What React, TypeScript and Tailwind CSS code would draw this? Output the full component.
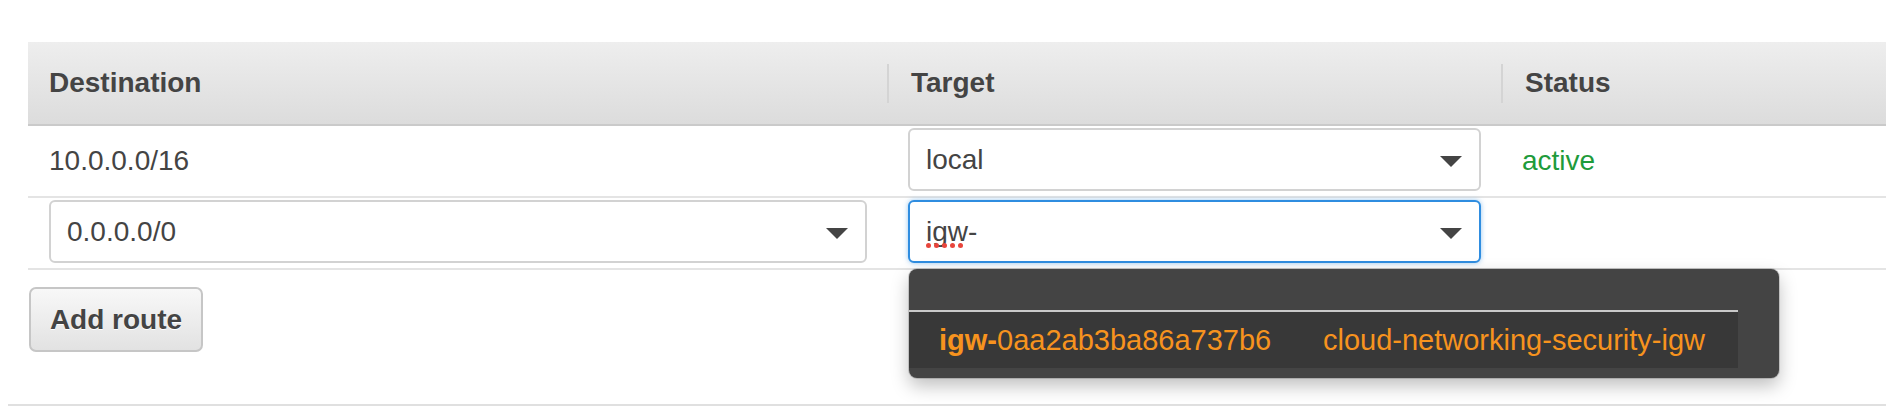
import React from "react";

const cols = "grid grid-cols-[859px_614px_1fr]";

function Caret() {
  return (
    <svg width="22" height="11" viewBox="0 0 22 11" className="mt-[4px] shrink-0">
      <polygon points="0,0 22,0 11,11" fill="#444" />
    </svg>
  );
}

function SelectBox({ children, focused }: { children: React.ReactNode; focused?: boolean }) {
  return (
    <div
      className={`flex h-[63px] w-full items-center justify-between rounded-[6px] border-2 bg-white pl-[16px] pr-[17px] ${
        focused
          ? "border-[#2f8de0] shadow-[0_0_5px_rgba(47,141,224,0.5)]"
          : "border-[#d2d2d2]"
      }`}
    >
      <span className="text-[28px] leading-[32px] text-[#444]">{children}</span>
      <Caret />
    </div>
  );
}

function HeaderCell({ label, divider }: { label: string; divider?: boolean }) {
  return (
    <div className="flex h-full items-center">
      {divider && <span className="h-[39px] w-[2px] bg-[#d4d4d4]" />}
      <span className={`text-[28px] font-bold text-[#444] ${divider ? "ml-[22px]" : "ml-[21px]"}`}>
        {label}
      </span>
    </div>
  );
}

// spellcheck squiggle under the typed text
function Misspelled({ children }: { children: React.ReactNode }) {
  return (
    <span className="relative">
      {children}
      <span className="absolute left-0 top-[27px] flex gap-[3px]">
        {[0, 1, 2, 3, 4].map((i) => (
          <span key={i} className="h-[5px] w-[5px] rounded-full bg-[#e8453c]" />
        ))}
      </span>
    </span>
  );
}

export default function App() {
  return (
    <div className="min-h-[412px] bg-white pt-[42px] font-['Liberation_Sans',Arial,sans-serif]">
      {/* route table */}
      <div className="ml-[28px]">
        <div className={`${cols} h-[84px] border-b-2 border-[#cacaca] bg-linear-to-b from-[#eeeeee] to-[#dcdcdc]`}>
          <HeaderCell label="Destination" />
          <HeaderCell label="Target" divider />
          <HeaderCell label="Status" divider />
        </div>

        <div className={`${cols} h-[72px] border-b-2 border-[#e4e4e4]`}>
          <div className="flex items-center pl-[21px] text-[28px] text-[#444]">10.0.0.0/16</div>
          <div className="pl-[21px] pr-[20px] pt-[2px]">
            <SelectBox>local</SelectBox>
          </div>
          <div className="flex items-center pl-[21px] text-[28px] text-[#1e9b3b]">active</div>
        </div>

        <div className={`${cols} h-[72px] border-b-2 border-[#e4e4e4]`}>
          <div className="pl-[21px] pr-[20px] pt-[2px]">
            <SelectBox>0.0.0.0/0</SelectBox>
          </div>
          <div className="relative pl-[21px] pr-[20px] pt-[2px]">
            <SelectBox focused>
              <Misspelled>igw</Misspelled>-
            </SelectBox>

            {/* suggestion menu */}
            <div className="absolute left-[22px] top-[71px] z-10 w-[870px] overflow-hidden rounded-[8px] bg-[#444] pb-[10px] shadow-[0_0_0_1px_rgba(0,0,0,0.15),0_8px_18px_rgba(0,0,0,0.25)]">
              <div className="h-[41px]" />
              <div className="mr-[41px] h-[2px] bg-[#c9c9c9]" />
              <div className="mr-[41px] flex h-[56px] items-center bg-[#383838] pl-[30px] text-[29px] leading-[32px] text-[#f7931e]">
                <span className="w-[384px]">
                  <b>igw-</b>0aa2ab3ba86a737b6
                </span>
                <span>cloud-networking-security-igw</span>
              </div>
            </div>
          </div>
          <div />
        </div>
      </div>

      <div className="pl-[29px] pt-[17px]">
        <button className="flex h-[65px] w-[174px] items-center justify-center rounded-[7px] border-2 border-[#c6c6c6] bg-linear-to-b from-[#f8f8f8] to-[#e2e2e2] text-[28px] font-bold text-[#444] [text-shadow:0_1px_0_#fff]">
          Add route
        </button>
      </div>

      <div className="ml-[8px] mt-[52px] h-[2px] bg-[#e0e0e0]" />
    </div>
  );
}
